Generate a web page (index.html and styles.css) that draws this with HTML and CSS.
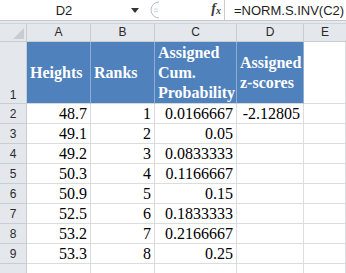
FILE: index.html
```html
<html>
<head>
    <link rel="stylesheet" href="styles.css">
</head>
<body>
    <div class="fbar">
        <div class="namebox">D2</div>
        <div class="nb-arrow">
            <svg width="8" height="5" viewBox="0 0 8 5"><path d="M0 0 L8 0 L4 5 Z" fill="#333"/></svg>
        </div>
        <div class="fx-box">
            <svg class="pill" width="14" height="18" viewBox="0 0 14 18">
                <path d="M13 1 A8 8 0 0 0 13 17" fill="none" stroke="#b9bec4" stroke-width="1"/>
                <path d="M8 8 H12 M8 10.5 H12" stroke="#d3d6da" stroke-width="1"/>
            </svg>
            <span class="fx">f<sub>x</sub></span>
        </div>
        <div class="formula">=NORM.S.INV(C2)</div>
    </div>
    <div class="strip"></div>

    <div class="sheet">
        <div class="corner">
            <svg width="12" height="12" viewBox="0 0 12 12"><path d="M12 1 L12 12 L1 12 Z" fill="#c9cdd2"/></svg>
        </div>
        <div class="colhead">A</div>
        <div class="colhead">B</div>
        <div class="colhead">C</div>
        <div class="colhead">D</div>
        <div class="colhead last">E</div>

        <div class="rowhead bottom">1</div>
        <div class="cell title">Heights</div>
        <div class="cell title">Ranks</div>
        <div class="cell title">Assigned<br>Cum.<br>Probability</div>
        <div class="cell title">Assigned<br>z-scores</div>
        <div class="cell"></div>

        <div class="rowhead">2</div>
        <div class="cell num">48.7</div>
        <div class="cell num">1</div>
        <div class="cell num">0.0166667</div>
        <div class="cell num">-2.12805</div>
        <div class="cell"></div>

        <div class="rowhead">3</div>
        <div class="cell num">49.1</div>
        <div class="cell num">2</div>
        <div class="cell num">0.05</div>
        <div class="cell"></div>
        <div class="cell"></div>

        <div class="rowhead">4</div>
        <div class="cell num">49.2</div>
        <div class="cell num">3</div>
        <div class="cell num">0.0833333</div>
        <div class="cell"></div>
        <div class="cell"></div>

        <div class="rowhead">5</div>
        <div class="cell num">50.3</div>
        <div class="cell num">4</div>
        <div class="cell num">0.1166667</div>
        <div class="cell"></div>
        <div class="cell"></div>

        <div class="rowhead">6</div>
        <div class="cell num">50.9</div>
        <div class="cell num">5</div>
        <div class="cell num">0.15</div>
        <div class="cell"></div>
        <div class="cell"></div>

        <div class="rowhead">7</div>
        <div class="cell num">52.5</div>
        <div class="cell num">6</div>
        <div class="cell num">0.1833333</div>
        <div class="cell"></div>
        <div class="cell"></div>

        <div class="rowhead">8</div>
        <div class="cell num">53.2</div>
        <div class="cell num">7</div>
        <div class="cell num">0.2166667</div>
        <div class="cell"></div>
        <div class="cell"></div>

        <div class="rowhead">9</div>
        <div class="cell num">53.3</div>
        <div class="cell num">8</div>
        <div class="cell num">0.25</div>
        <div class="cell"></div>
        <div class="cell"></div>

        <div class="rowhead"></div>
        <div class="cell"></div>
        <div class="cell"></div>
        <div class="cell"></div>
        <div class="cell"></div>
        <div class="cell"></div>
    </div>
</body>
</html>
```

FILE: styles.css
```css
body {
    margin: 0;
    width: 346px;
    height: 273px;
    overflow: hidden;
    background: #ffffff;
    font-family: "Liberation Sans", Arial, sans-serif;
}

.fbar {
    display: flex;
    align-items: center;
    height: 20px;
    background: #ffffff;
    border-bottom: 1px solid #c3c8ce;
}

.namebox {
    width: 128px;
    text-align: center;
    font-size: 13px;
    color: #1e1e1e;
}

.nb-arrow {
    width: 17px;
    display: flex;
    align-items: center;
    padding-left: 3px;
    box-sizing: border-box;
}

.fx-box {
    width: 80px;
    height: 20px;
    display: flex;
    align-items: center;
    justify-content: space-between;
    border-right: 1px solid #c9cdd2;
    box-sizing: border-box;
    padding-right: 3px;
}

.pill {
    margin-left: 1px;
}

.fx {
    font-family: "Liberation Serif", serif;
    font-style: italic;
    font-weight: bold;
    font-size: 14px;
    color: #3a3a3a;
    line-height: 14px;
}

.fx sub {
    font-size: 10px;
    vertical-align: -1px;
}

.formula {
    padding-left: 9px;
    font-size: 13px;
    color: #1e1e1e;
    white-space: nowrap;
}

.strip {
    height: 2px;
    background: #e6e9ed;
}

.sheet {
    display: grid;
    grid-template-columns: 27px 64px 64px 82px 67px 1fr;
    grid-template-rows: 19px 62px repeat(9, 20px);
}

.sheet > div {
    box-sizing: border-box;
    border-right: 1px solid #dadcdd;
    border-bottom: 1px solid #dadcdd;
}

.corner {
    background: #e4e7eb;
    display: flex;
    align-items: flex-end;
    justify-content: flex-end;
    padding: 0 2px 2px 0;
    border-top: 1px solid #d0d4d9;
}

.sheet > .corner,
.sheet > .colhead,
.sheet > .rowhead {
    border-right-color: #c8cdd3;
    border-bottom-color: #c8cdd3;
}

.colhead {
    background: #e4e7eb;
    border-top: 1px solid #d0d4d9;
    text-align: center;
    font-size: 12px;
    line-height: 17px;
    color: #2a2a2a;
}

.sheet > .colhead.last {
    border-right: none;
}

.rowhead {
    background: #e4e7eb;
    display: flex;
    align-items: center;
    justify-content: center;
    font-size: 12px;
    color: #2a2a2a;
}

.rowhead.bottom {
    align-items: flex-end;
    padding-bottom: 1px;
}

.cell {
    font-family: "Liberation Serif", "Times New Roman", serif;
    font-size: 16px;
    line-height: 19px;
    color: #000;
    white-space: nowrap;
}

.sheet > .title {
    background: #4f81bd;
    color: #ffffff;
    font-weight: bold;
    line-height: 20px;
    padding-left: 3px;
    display: flex;
    align-items: center;
    border-right-color: #8eacd4;
    border-bottom-color: #d4d8dd;
}

.num {
    text-align: right;
    padding-right: 3px;
}
```
